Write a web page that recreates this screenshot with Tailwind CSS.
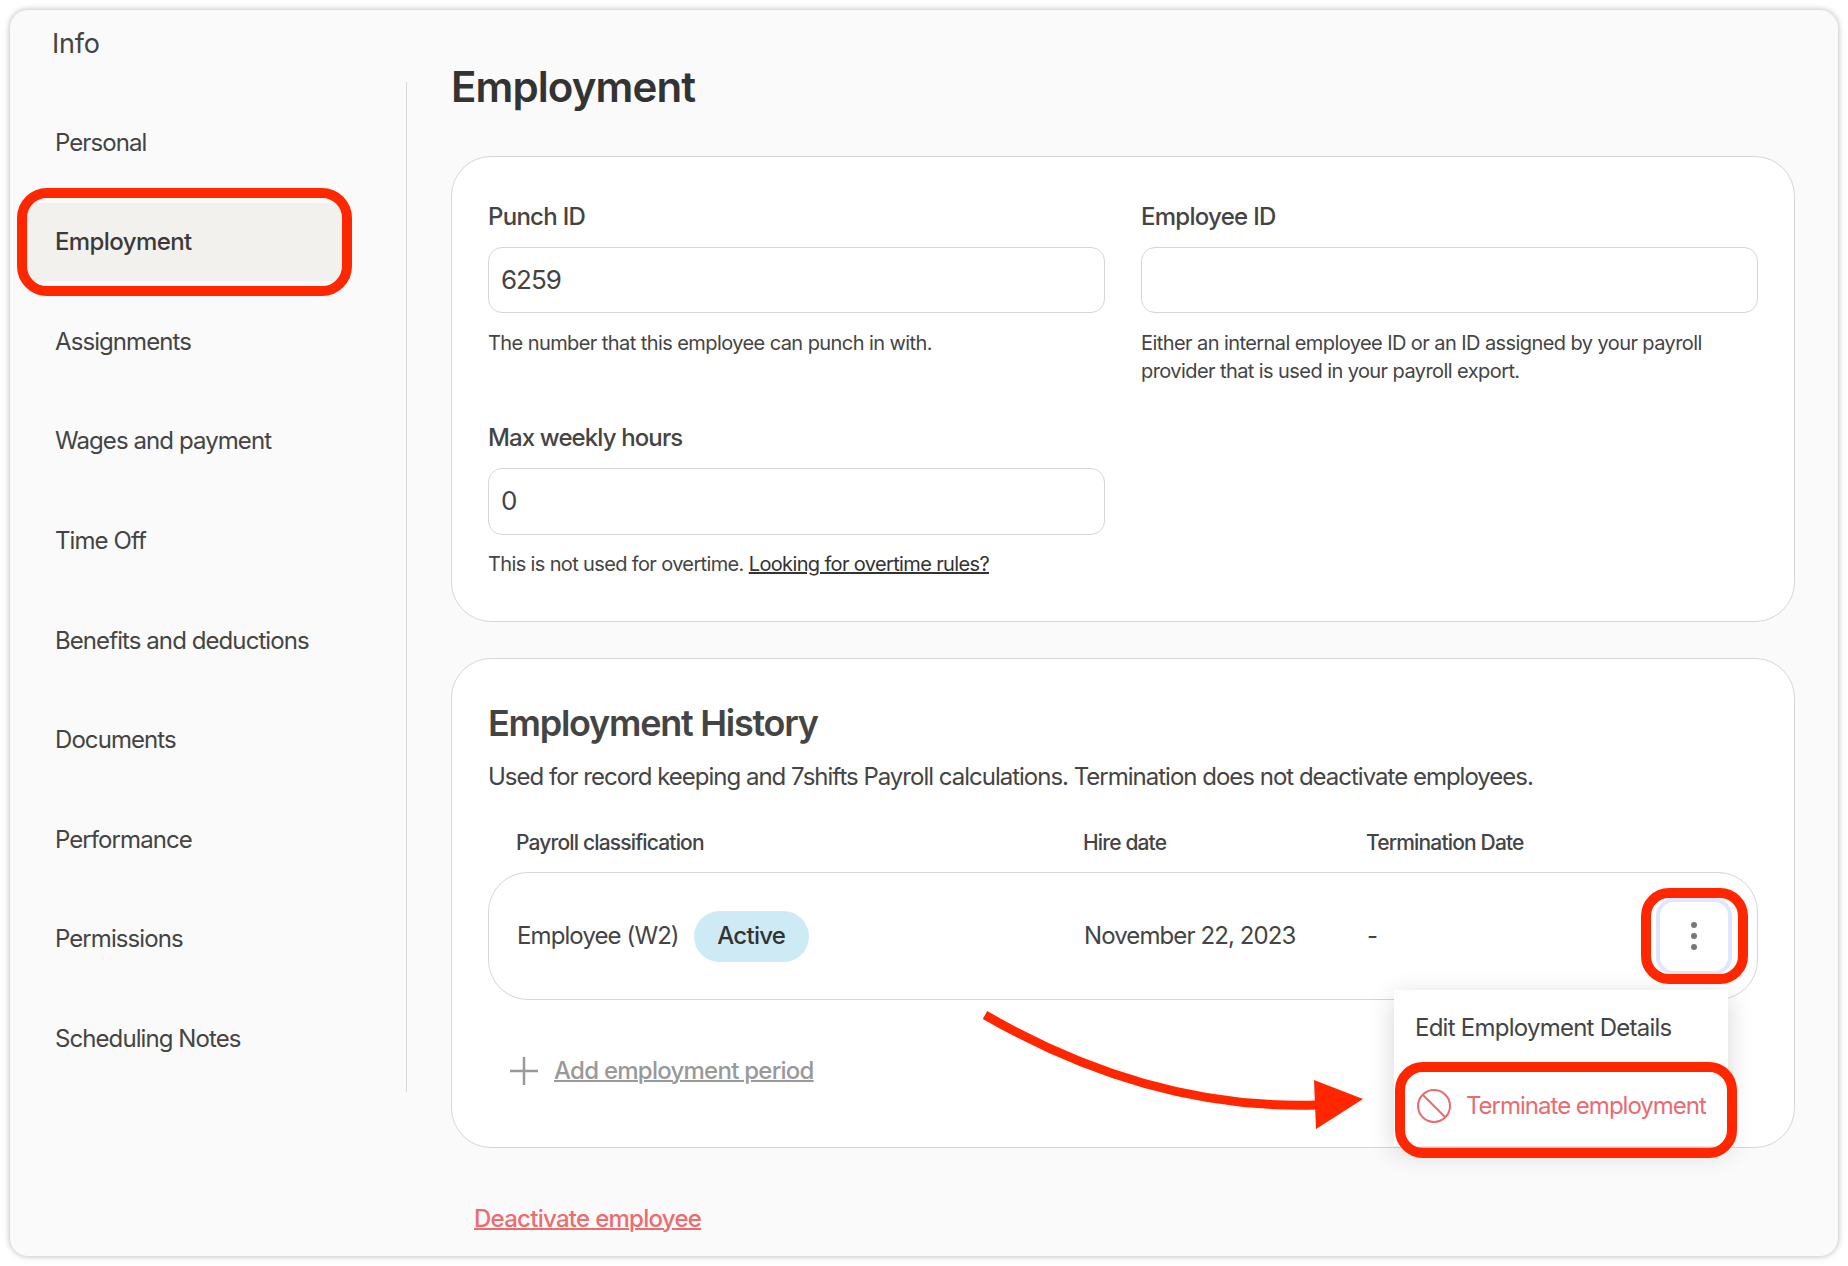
<!DOCTYPE html>
<html lang="en">
  <head>
    <meta charset="UTF-8" />
    <title>Employment</title>
    <script src="https://cdn.jsdelivr.net/npm/@tailwindcss/browser@4"></script>
  </head>
  <body class="bg-white font-['Inter',sans-serif] text-[#444] tracking-[-0.72px]">
    <div class="relative w-[1848px] h-[1266px] p-[10px] overflow-hidden">
      <div class="flex h-[1246px] w-[1828px] rounded-[18px] bg-[#fafafa] shadow-[0_0_6px_rgba(0,0,0,0.3)]">
        <aside class="w-[397px] pt-[18px] shrink-0">
          <div class="ml-[42px] mb-[22px] h-[32px] text-[27px] leading-[32px] tracking-[-0.2px]">Info</div>
          <nav class="flex flex-col gap-[21.6px] border-r border-[#d6d6d6] pt-[21.6px] pb-[14.4px] text-[24px] tracking-[-0.92px]">
            <a class="flex h-[78px] items-center pl-[45px]">Personal</a>
            <a class="flex h-[78px] w-[315px] ml-[17px] items-center pl-[28px] bg-[#f2f1ee] font-medium text-[#3a3a3a] tracking-[-0.6px]">Employment</a>
            <a class="flex h-[78px] items-center pl-[45px]">Assignments</a>
            <a class="flex h-[78px] items-center pl-[45px]">Wages and payment</a>
            <a class="flex h-[78px] items-center pl-[45px]">Time Off</a>
            <a class="flex h-[78px] items-center pl-[45px]">Benefits and deductions</a>
            <a class="flex h-[78px] items-center pl-[45px]">Documents</a>
            <a class="flex h-[78px] items-center pl-[45px]">Performance</a>
            <a class="flex h-[78px] items-center pl-[45px]">Permissions</a>
            <a class="flex h-[78px] items-center pl-[45px]">Scheduling Notes</a>
          </nav>
        </aside>

        <main class="flex-1 pl-[44px] pr-[43px] pt-[51px]">
          <h1 class="h-[52px] text-[42px] leading-[52px] font-semibold text-[#333] tracking-[-0.9px]">Employment</h1>

          <section class="mt-[43px] rounded-[40px] border border-[#d6d6d6] bg-white px-[36px] pt-[44px] pb-[43px]">
            <div class="grid grid-cols-[617px_617px] gap-x-[36px]">
              <div>
                <label class="block text-[24px] leading-[32px] font-medium">Punch ID</label>
                <div class="mt-[14px] flex h-[66px] items-center rounded-[14px] border border-[#d6d6d6] px-[12px] pb-[2px] text-[26px] tracking-[-1px]">6259</div>
                <p class="mt-[16px] text-[20px] leading-[28px] tracking-[-0.58px]">The number that this employee can punch in with.</p>
              </div>
              <div>
                <label class="block text-[24px] leading-[32px] font-medium">Employee ID</label>
                <div class="mt-[14px] h-[66px] rounded-[14px] border border-[#d6d6d6]"></div>
                <p class="mt-[16px] text-[20px] leading-[28px] tracking-[-0.58px]">Either an internal employee ID or an ID assigned by your payroll provider that is used in your payroll export.</p>
              </div>
            </div>
            <div class="mt-[37px] w-[617px]">
              <label class="block text-[24px] leading-[32px] font-medium tracking-[-0.88px]">Max weekly hours</label>
              <div class="mt-[14px] flex h-[67px] items-center rounded-[14px] border border-[#d6d6d6] px-[12px] pb-[2px] text-[26px] tracking-[-1px]">0</div>
              <p class="mt-[15px] text-[20px] leading-[28px] tracking-[-0.64px]">This is not used for overtime. <a class="underline text-[#333]">Looking for overtime rules?</a></p>
            </div>
          </section>

          <section class="mt-[36px] rounded-[40px] border border-[#d6d6d6] bg-white px-[36px] pt-[42px] pb-[60px]">
            <h2 class="text-[36px] leading-[44px] font-semibold tracking-[-1.26px]">Employment History</h2>
            <p class="mt-[16px] text-[24px] leading-[32px] tracking-[-1px]">Used for record keeping and 7shifts Payroll calculations. Termination does not deactivate employees.</p>
            <div class="mt-[36px] grid grid-cols-[567px_283px_1fr] pl-[28px] text-[21px] leading-[28px] font-medium tracking-[-0.84px]">
              <span>Payroll classification</span>
              <span>Hire date</span>
              <span>Termination Date</span>
            </div>
            <div class="relative mt-[15px] grid h-[128px] w-[1270px] grid-cols-[567px_283px_1fr] items-center rounded-[40px] border border-[#d6d6d6] pl-[28px] pr-[29px] text-[24px] tracking-[-0.9px]">
              <div class="flex items-center gap-[15px]">
                <span>Employee (W2)</span>
                <span class="flex h-[51px] w-[115px] items-center justify-center rounded-full bg-[#cdeaf5] font-medium text-[#333] tracking-[-0.72px]">Active</span>
              </div>
              <span>November 22, 2023</span>
              <div class="flex items-center justify-between">
                <span>-</span>
                <button class="flex h-[69px] w-[68px] flex-col items-center justify-center gap-[5px] rounded-[14px] bg-white shadow-[0_0_0_4px_#dfe6fd]">
                  <i class="h-[6px] w-[6px] rounded-full bg-[#777]"></i>
                  <i class="h-[6px] w-[6px] rounded-full bg-[#777]"></i>
                  <i class="h-[6px] w-[6px] rounded-full bg-[#777]"></i>
                </button>
              </div>
              <div class="absolute left-[905px] top-[117px] z-10 h-[156px] w-[334px] bg-white shadow-[0_6px_24px_rgba(0,0,0,0.16)]">
                <div class="flex h-[76px] items-center pl-[21px] tracking-[-0.75px]">Edit Employment Details</div>
                <div class="flex h-[80px] items-center gap-[14px] pl-[22px] text-[#e96b70] tracking-[-1px]">
                  <svg class="h-[36px] w-[36px]" viewBox="0 0 36 36" fill="none" stroke="#e96b70" stroke-width="2"><circle cx="18" cy="18" r="16" /><path d="M7 7l22 22" /></svg>
                  <span>Terminate employment</span>
                </div>
              </div>
            </div>
            <div class="mt-[55px] flex h-[32px] items-center pl-[21px] text-[24px] text-[#999]">
              <svg class="h-[30px] w-[30px]" viewBox="0 0 30 30" fill="none" stroke="#999" stroke-width="2.5"><path d="M15 1v28M1 15h28" /></svg>
              <a class="ml-[15px] font-medium underline decoration-2 tracking-[-0.75px]">Add employment period</a>
            </div>
          </section>

          <a class="mt-[55px] ml-[23px] block text-[24px] leading-[32px] font-medium text-[#ee6b6e] underline decoration-2 tracking-[-0.72px]">Deactivate employee</a>
        </main>
      </div>

      <!-- annotations -->
      <div class="absolute left-[17px] top-[188px] h-[108px] w-[335px] rounded-[30px] border-[10px] border-[#ff2600]"></div>
      <div class="absolute left-[1641px] top-[888px] z-20 h-[96px] w-[107px] rounded-[28px] border-[10px] border-[#ff2600]"></div>
      <div class="absolute left-[1395px] top-[1062px] z-20 h-[96px] w-[342px] rounded-[28px] border-[10px] border-[#ff2600]"></div>
      <svg class="absolute left-0 top-0 z-20 h-[1266px] w-[1848px]" viewBox="0 0 1848 1266" fill="none">
        <path d="M985 1015Q1150 1110 1316 1105" stroke="#ff2600" stroke-width="9" />
        <path d="M1314 1080L1363 1099L1316 1129Z" fill="#ff2600" />
      </svg>
    </div>
  </body>
</html>
